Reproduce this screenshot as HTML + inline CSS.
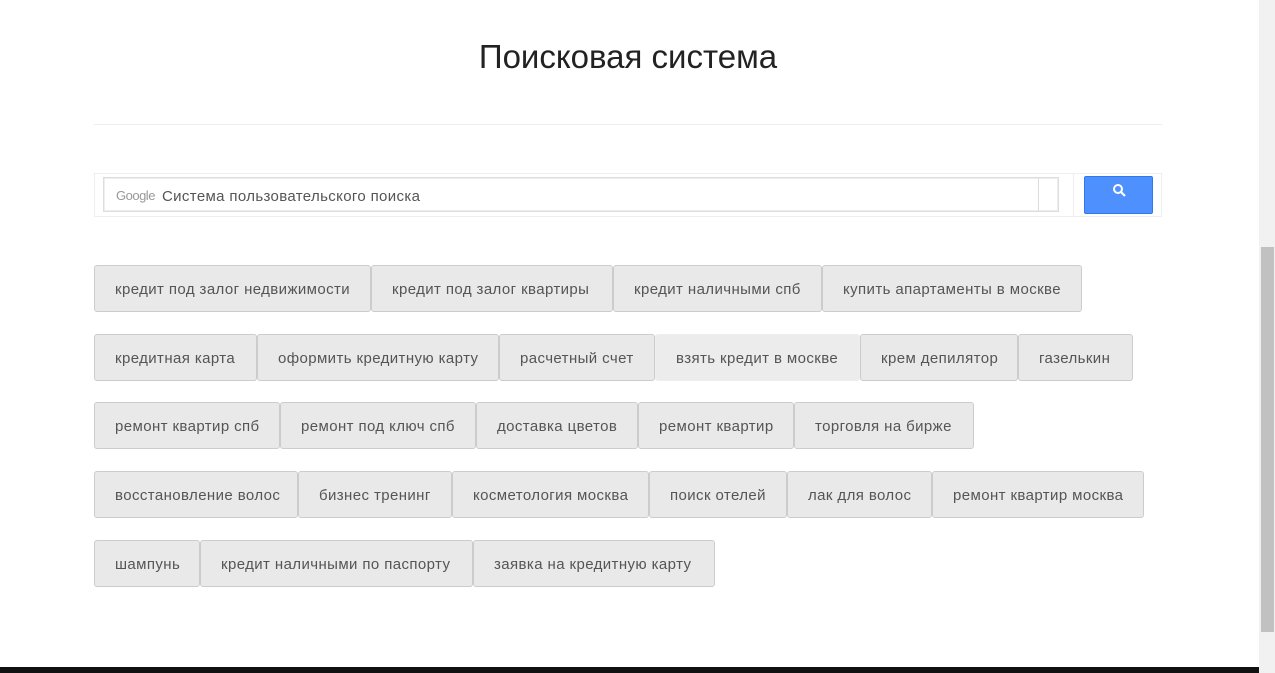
<!DOCTYPE html>
<html><head><meta charset="utf-8"><style>
body{margin:0;width:1275px;height:673px;background:#fff;overflow:hidden;position:relative;font-family:"Liberation Sans",Arial,sans-serif}
.t{position:absolute;left:0;width:1256px;top:38px;text-align:center;font-size:33px;color:#222;font-weight:300}
.hr{position:absolute;left:94px;width:1068px;top:124px;height:1px;background:#eee}
.sb{position:absolute;left:94px;top:173px;width:1066px;height:42px;border:1px solid #eee}
.in{position:absolute;left:103px;top:177px;width:954px;height:33px;border:1px solid #ddd;box-shadow:inset 0 0 0 1px #eee}
.in .g{position:absolute;left:12px;top:10px;font-size:13px;color:#999;letter-spacing:-0.5px}
.in .p{position:absolute;left:58px;top:10px;font-size:15px;color:#555;letter-spacing:0.35px}
.in .d{position:absolute;left:934px;top:0;width:1px;height:33px;background:#ddd}
.sep{position:absolute;left:1073px;top:174px;width:1px;height:42px;background:#eee}
.btn{position:absolute;left:1084px;top:176px;width:67px;height:36px;background:#4d90fe;border:1px solid #3079ed;border-radius:2px}
.b{position:absolute;background:#e9e9e9;border:1px solid #ccc;border-radius:3px;box-sizing:border-box;height:47px;font-size:15px;color:#555;text-align:left;padding-left:20px;line-height:47px;white-space:nowrap;letter-spacing:0.4px}
.sc{position:absolute;left:1259px;top:0;width:16px;height:673px;background:#f1f1f1}
.th{position:absolute;left:1261px;top:247px;width:13px;height:385px;background:#c1c1c1}
.bot{position:absolute;left:0;top:667px;width:1259px;height:6px;background:#111}
</style></head><body>
<div class="t">Поисковая система</div>
<div class="hr"></div>
<div class="sb"></div>
<div class="in"><span class="g">Google</span><span class="p">Система пользовательского поиска</span><div class="d"></div></div>
<div class="sep"></div>
<div class="btn"><svg width="67" height="36" viewBox="0 0 67 36"><circle cx="33" cy="12" r="4" fill="none" stroke="#fff" stroke-width="2"/><path d="M36 15l4 4" stroke="#fff" stroke-width="2.2"/></svg></div>

<div class="b" style="left:94px;top:265px;width:277px">кредит под залог недвижимости</div>
<div class="b" style="left:371px;top:265px;width:242px">кредит под залог квартиры</div>
<div class="b" style="left:613px;top:265px;width:209px">кредит наличными спб</div>
<div class="b" style="left:822px;top:265px;width:260px">купить апартаменты в москве</div>

<div class="b" style="left:94px;top:334px;width:163px">кредитная карта</div>
<div class="b" style="left:257px;top:334px;width:242px">оформить кредитную карту</div>
<div class="b" style="left:499px;top:334px;width:156px">расчетный счет</div>
<div class="b" style="left:655px;top:334px;width:205px;background:#ececec;border-color:#eee">взять кредит в москве</div>
<div class="b" style="left:860px;top:334px;width:158px">крем депилятор</div>
<div class="b" style="left:1018px;top:334px;width:115px">газелькин</div>

<div class="b" style="left:94px;top:402px;width:186px">ремонт квартир спб</div>
<div class="b" style="left:280px;top:402px;width:196px">ремонт под ключ спб</div>
<div class="b" style="left:476px;top:402px;width:162px">доставка цветов</div>
<div class="b" style="left:638px;top:402px;width:156px">ремонт квартир</div>
<div class="b" style="left:794px;top:402px;width:180px">торговля на бирже</div>

<div class="b" style="left:94px;top:471px;width:204px">восстановление волос</div>
<div class="b" style="left:298px;top:471px;width:154px">бизнес тренинг</div>
<div class="b" style="left:452px;top:471px;width:197px">косметология москва</div>
<div class="b" style="left:649px;top:471px;width:138px">поиск отелей</div>
<div class="b" style="left:787px;top:471px;width:145px">лак для волос</div>
<div class="b" style="left:932px;top:471px;width:212px">ремонт квартир москва</div>

<div class="b" style="left:94px;top:540px;width:106px">шампунь</div>
<div class="b" style="left:200px;top:540px;width:273px">кредит наличными по паспорту</div>
<div class="b" style="left:473px;top:540px;width:242px">заявка на кредитную карту</div>

<div class="sc"></div><div class="th"></div>
<div class="bot"></div>
</body></html>
